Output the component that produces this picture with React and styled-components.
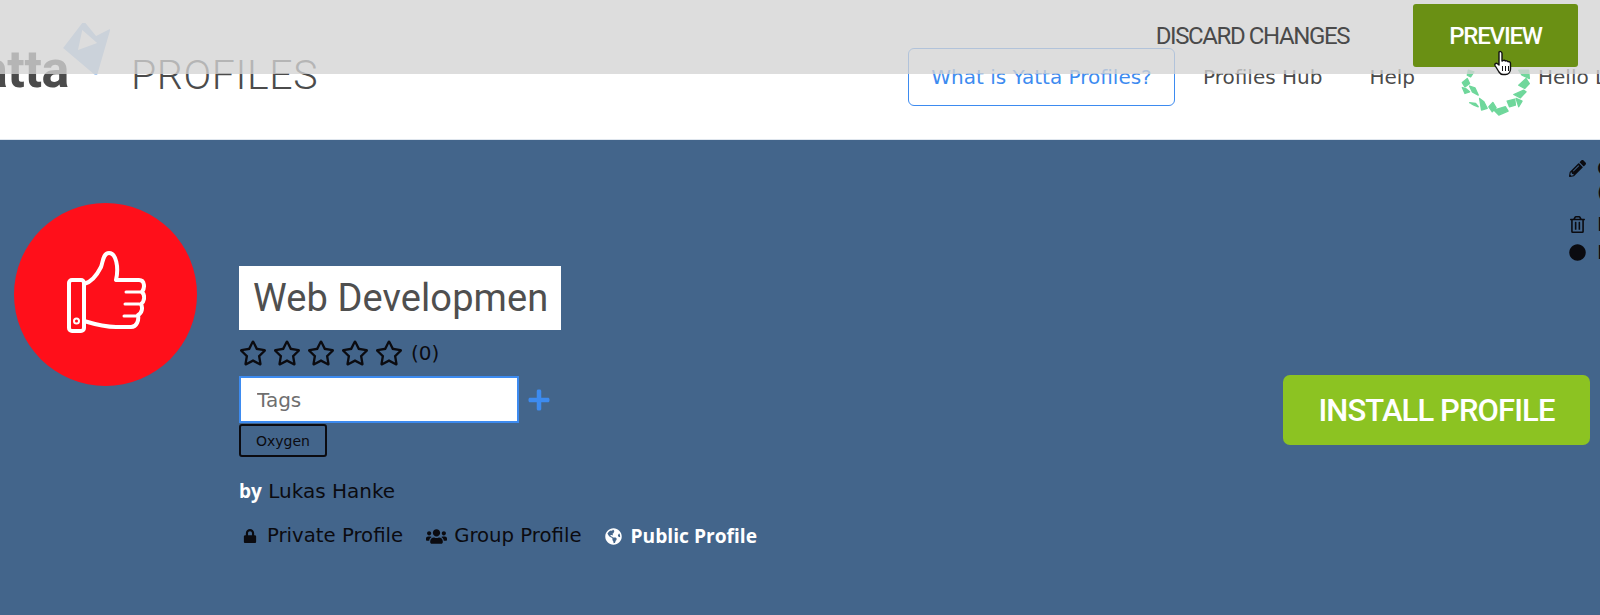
import React from 'react';
import styled, { createGlobalStyle } from 'styled-components';
import { FaLock, FaUsers, FaGlobeAmericas, FaPencilAlt, FaRegTrashAlt, FaCircle, FaPlus, FaRegStar } from 'react-icons/fa';

const GlobalStyle = createGlobalStyle`
  html, body {
    margin: 0;
    padding: 0;
    overflow: hidden;
    background: #43658b;
  }
  * { box-sizing: border-box; }
`

const Page = styled.div`
  position: relative;
  width: 1600px;
  height: 615px;
  overflow: hidden;
  font-family: "DejaVu Sans", sans-serif;
  color: #0b0b10;
`

const EditBar = styled.div`
  position: absolute;
  top: 0;
  left: 0;
  right: 0;
  height: 74px;
  display: flex;
  align-items: center;
  justify-content: flex-end;
  padding: 4px 22px 7px 0;
  background: rgba(212, 212, 212, 0.78);
`
const Discard = styled.span`
  margin-right: 64px;
  font-family: Roboto, sans-serif;
  font-size: 24px;
  color: #4a4a4a;
  letter-spacing: -1.4px;
`
const PreviewButton = styled.div`
  position: relative;
  width: 165px;
  height: 63px;
  display: flex;
  align-items: center;
  justify-content: center;
  background: #6a9014;
  border-radius: 3px;
  font-family: Roboto, sans-serif;
  font-weight: 500;
  font-size: 24px;
  letter-spacing: -1.2px;
  color: #fff;
`
const Cursor = styled.svg`
  position: absolute;
  left: 80px;
  top: 46px;
  width: 20px;
  height: 26px;
`

const Header = styled.header`
  height: 140px;
  display: flex;
  align-items: center;
  padding-top: 10px;
  background: #fff;
  border-bottom: 1px solid #dfe6ee;
`
const Logo = styled.div`
  position: relative;
  margin-left: -50px;
  width: 161px;
  height: 70px;
  display: flex;
  align-items: flex-end;
`
const LogoWord = styled.span`
  margin-bottom: 11px;
  font-family: Roboto, sans-serif;
  font-weight: 700;
  font-size: 52px;
  line-height: 58px;
  letter-spacing: -0.5px;
  color: #4b4b4b;
`
const LogoMark = styled.svg`
  position: absolute;
  left: 111px;
  top: -18px;
  width: 51px;
  height: 54px;
`
const ProductName = styled.span`
  margin-left: 20px;
  font-family: Roboto, sans-serif;
  font-weight: 300;
  font-size: 41px;
  letter-spacing: 0.6px;
  color: #4b4b4b;
`
const Nav = styled.nav`
  margin: 4px 0 0 auto;
  display: flex;
  align-items: center;
  flex: none;
  width: 692px;
  font-size: 20px;
  color: #4b4b4b;
`
const HelpButton = styled.div`
  flex: none;
  width: 267px;
  height: 58px;
  display: flex;
  align-items: center;
  justify-content: center;
  border: 1px solid #3d8bf0;
  border-radius: 6px;
  color: #3d8bf0;
`
const NavLink = styled.span`
  margin-left: ${p => p.$gap}px;
  white-space: nowrap;
`
const AvatarRing = styled.svg`
  margin: 28px 0 0 44px;
  width: 73px;
  height: 52px;
  flex: none;
`
const Greeting = styled.span`
  margin-left: 6px;
  white-space: nowrap;
`

const Hero = styled.section`
  height: 475px;
  display: flex;
  align-items: flex-start;
  background: #43658b;
`
const ProfileBadge = styled.div`
  flex: none;
  width: 183px;
  height: 183px;
  margin: 63px 0 0 14px;
  padding-bottom: 6px;
  display: flex;
  align-items: center;
  justify-content: center;
  border-radius: 50%;
  background: #ff0f1a;
`
const ProfileInfo = styled.div`
  flex: none;
  margin: 126px 0 0 42px;
  width: 560px;
`
const TitleInput = styled.input`
  display: block;
  width: 322px;
  height: 64px;
  padding: 0 14px;
  border: 0;
  outline: 0;
  font-family: Roboto, sans-serif;
  font-weight: 400;
  font-size: 38px;
  letter-spacing: 0.1px;
  color: #4f4f4f;
  background: #fff;
`
const Rating = styled.div`
  display: flex;
  align-items: center;
  height: 46px;
  gap: 6px;
  font-size: 20px;
`
const Stars = styled.div`
  display: flex;
  gap: 6px;
  margin-right: 2px;
`
const TagRow = styled.div`
  display: flex;
  align-items: center;
`
const TagInput = styled.input`
  width: 280px;
  height: 47px;
  padding: 0 16px;
  border: 2px solid #3d8bf0;
  outline: 0;
  font-family: "DejaVu Sans", sans-serif;
  font-size: 20px;
  background: #fff;
  &::placeholder { color: #6f6f6f; }
`
const AddTag = styled.span`
  display: flex;
  margin-left: 8px;
  color: #3d8bf0;
`
const Tag = styled.div`
  width: 88px;
  height: 33px;
  margin-top: 1px;
  display: flex;
  align-items: center;
  justify-content: center;
  border: 2px solid #0b0b10;
  border-radius: 3px;
  font-size: 14px;
`
const Author = styled.div`
  margin-top: 21px;
  font-size: 20px;
  line-height: 26px;
`
const AuthorBy = styled.b`
  font-family: "Open Sans", sans-serif;
  font-size: 19px;
  color: #fff;
`
const Visibility = styled.div`
  display: flex;
  align-items: center;
  margin-top: 19px;
  padding-left: 4px;
  line-height: 26px;
`
const VisibilityItem = styled.span`
  display: flex;
  align-items: center;
  gap: ${p => p.$gap}px;
  margin-right: 23px;
  color: ${p => (p.$active ? '#fff' : '#0b0b10')};
  font-family: ${p => (p.$active ? '"Open Sans", sans-serif' : 'inherit')};
  font-size: ${p => (p.$active ? 19.2 : 19.7)}px;
  font-weight: ${p => (p.$active ? 700 : 400)};
  white-space: nowrap;
`

const SideColumn = styled.div`
  margin-left: auto;
  flex: none;
  width: 317px;
`
const SideActions = styled.ul`
  list-style: none;
  margin: 16px 0 0;
  padding: 0 0 0 286px;
  height: 219px;
  white-space: nowrap;
  font-size: 20px;
`
const SideAction = styled.li`
  display: flex;
  height: ${p => p.$h}px;
  align-items: flex-start;
  gap: 10px;
  line-height: 24px;
`
const SideIcon = styled.span`
  flex: none;
  display: flex;
  width: 18px;
  height: 24px;
  align-items: center;
`
const InstallButton = styled.div`
  width: 307px;
  height: 70px;
  display: flex;
  align-items: center;
  justify-content: center;
  border-radius: 7px;
  background: #8cc322;
  font-family: Roboto, sans-serif;
  font-weight: 500;
  font-size: 31px;
  letter-spacing: -0.9px;
  color: #fff;
`

// green pieces of the avatar ring, read off the reference
const ringPieces = [
  '70,122 85,110 92,125 78,135',
  '70,137 80,140 92,150 78,155',
  '92,133 108,138 118,160 100,150',
  '92,183 110,185 118,195 105,190',
  '122,170 135,180 145,200 128,205',
  '150,195 162,182 172,198 160,210',
  '165,205 200,195 208,208 180,220',
  '205,178 228,172 230,190 212,195',
  '232,170 250,178 240,195',
  '225,158 255,145 262,150 245,168',
  '240,130 262,110 272,125 258,140',
  '240,85 270,85 272,110 250,100',
  '88,85 105,90 95,105 85,100',
]

const Avatar = () => (
  <AvatarRing viewBox="60 70 220 155">
    {ringPieces.map(points => (
      <polygon key={points} points={points} fill="#6fd79b" stroke="#6fd79b" strokeWidth="4" strokeLinejoin="round" />
    ))}
  </AvatarRing>
)

const ThumbIcon = () => (
  <svg width="80" height="84" viewBox="0 0 80 84" fill="none" stroke="#fff" strokeWidth="4" strokeLinejoin="round" strokeLinecap="round">
    <rect x="3" y="30" width="15" height="51" rx="3" />
    <circle cx="10.5" cy="71" r="2.5" strokeWidth="2" />
    <path d="M18 34c8-2 13-9 17-17 2-5 2-14 8-14 7 0 10 14 7 27h23c6 0 6 8 3 12 3 3 3 9-1 12 2 4 1 9-3 11 1 5-1 12-7 12H50c-12 0-22-3-32-6" />
    <path d="M60 42h16M59 54h14M58 66h12" strokeWidth="3" />
  </svg>
)

const App = () => {
  return (
    <Page>
      <GlobalStyle />
      <Header>
        <Logo>
          <LogoWord>Yatta</LogoWord>
          <LogoMark viewBox="0 0 48 54" preserveAspectRatio="none">
            <path fillRule="evenodd" fill="#aecbef" d="M20 1l3 0 10 13 13-7 0 2-12 44-2 0L2 26zM20 8l-4 20 18-7z" />
          </LogoMark>
        </Logo>
        <ProductName>PROFILES</ProductName>
        <Nav>
          <HelpButton>What is Yatta Profiles?</HelpButton>
          <NavLink $gap={28}>Profiles Hub</NavLink>
          <NavLink $gap={47}>Help</NavLink>
          <Avatar />
          <Greeting>Hello Lukas</Greeting>
        </Nav>
      </Header>
      <Hero>
        <ProfileBadge>
          <ThumbIcon />
        </ProfileBadge>
        <ProfileInfo>
          <TitleInput readOnly value="Web Development" />
          <Rating>
            <Stars>
              {[1, 2, 3, 4, 5].map(n => <FaRegStar key={n} size={28} />)}
            </Stars>
            (0)
          </Rating>
          <TagRow>
            <TagInput placeholder="Tags" />
            <AddTag><FaPlus size={24} /></AddTag>
          </TagRow>
          <Tag>Oxygen</Tag>
          <Author><AuthorBy>by</AuthorBy> Lukas Hanke</Author>
          <Visibility>
            <VisibilityItem $gap={10}><FaLock size={14} />Private Profile</VisibilityItem>
            <VisibilityItem $gap={7}><FaUsers size={21} />Group Profile</VisibilityItem>
            <VisibilityItem $gap={9} $active><FaGlobeAmericas size={17} />Public Profile</VisibilityItem>
          </Visibility>
        </ProfileInfo>
        <SideColumn>
          <SideActions>
            <SideAction $h={56}><SideIcon><FaPencilAlt size={17} /></SideIcon><span>Change Owner<br />(Lukas Hanke)</span></SideAction>
            <SideAction $h={28}><SideIcon><FaRegTrashAlt size={17} /></SideIcon>Remove</SideAction>
            <SideAction $h={28}><SideIcon><FaCircle size={17} /></SideIcon>Private</SideAction>
          </SideActions>
          <InstallButton>INSTALL PROFILE</InstallButton>
        </SideColumn>
      </Hero>
      <EditBar>
        <Discard>DISCARD CHANGES</Discard>
        <PreviewButton>
          PREVIEW
          <Cursor viewBox="0 0 20 26">
            <path fill="#fff" stroke="#111" strokeWidth="1.4" strokeLinejoin="round" d="M6 2c1.500-1.200 3 0 3 1.500V11l1-.5c1-.6 2-.2 2.300.5 1-.6 2.300-.2 2.700.8 1.200-.5 2.500.3 2.500 1.700v5.500c0 3-2 5.500-5 5.500H10c-2 0-3-1-4-2.500L2 15.500c-.8-1.500 1-3 2.500-1.800L6 15z" />
            <path stroke="#111" strokeWidth="1" d="M9.500 16v5M12.500 16v5M15.500 16v5" />
          </Cursor>
        </PreviewButton>
      </EditBar>
    </Page>
  )
}

export default App
